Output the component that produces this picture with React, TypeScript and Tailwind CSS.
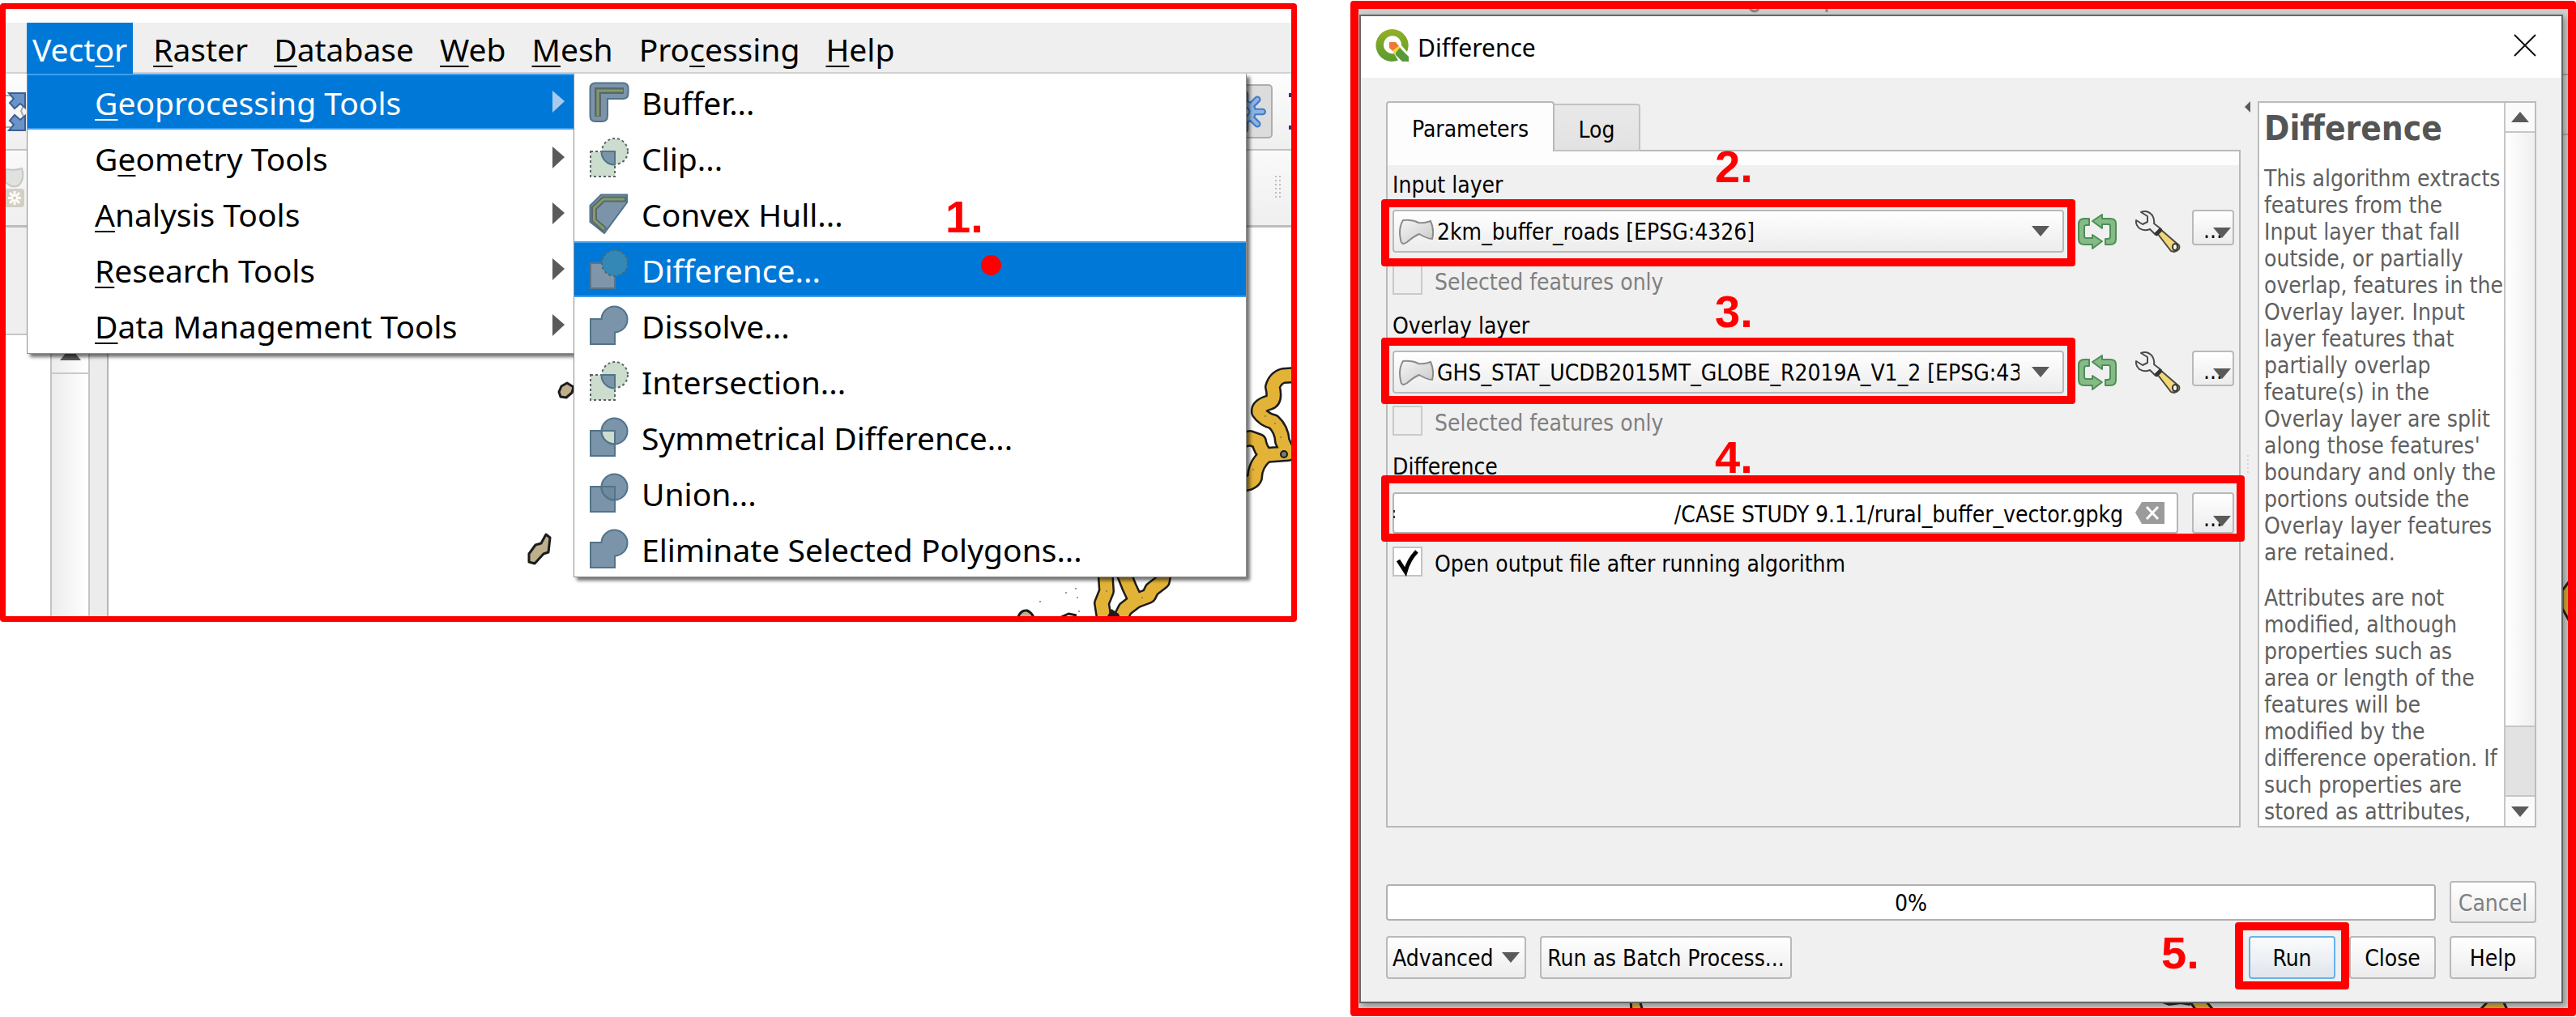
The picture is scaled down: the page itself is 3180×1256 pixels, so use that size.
import type { ReactNode } from 'react';

const BLUE = '#7b94a9';
const EDGE = '#51748a';
const PALE = '#ccdccd';

const UNION_PATH = 'M2 17 H15.5 A16 16 0 1 1 32 33.5 V48 H2 Z';
const LENS_PATH = 'M15.5 17 H32 V33.5 A16 16 0 0 1 15.5 17 Z';

type IconKind = 'buffer' | 'clip' | 'hull' | 'difference' | 'dissolve' | 'symmetric' | 'union';

function ToolIcon({ kind }: { kind: IconKind }) {
  return (
    <svg viewBox="0 0 50 50" className="size-[50px] shrink-0" aria-hidden="true">
      {kind === 'buffer' && (
        <g>
          <path d="M8 1.5 H42 Q48.500 1.500 48.500 8 V14 Q48.500 21 42 21 H23 V42 Q23 49 16 49 H8 Q1.500 49 1.500 42 V8 Q1.500 1.500 8 1.500 Z" fill={BLUE} stroke={EDGE} strokeWidth="2" />
          <path d="M11 43 V11 H43" fill="none" stroke="#5c666b" strokeWidth="8" />
          <path d="M11 42 V11 H42" fill="none" stroke="#7d9d6c" strokeWidth="3" />
        </g>
      )}
      {kind === 'clip' && (
        <g>
          <circle cx="32" cy="17" r="16" fill={PALE} stroke="#59645f" strokeWidth="2" strokeDasharray="3 3" />
          <rect x="2" y="17" width="30" height="31" fill={PALE} stroke="#59645f" strokeWidth="2" strokeDasharray="3 3" />
          <path d={LENS_PATH} fill={BLUE} stroke={EDGE} strokeWidth="2" />
        </g>
      )}
      {kind === 'hull' && (
        <g>
          <path d="M15 1.500 H47 V11 L19 49 L1.500 35 V15 Z" fill={BLUE} stroke={EDGE} strokeWidth="2" />
          <path d="M46 7 H18 L6.500 18 V33 L20 45" fill="none" stroke="#5c666b" strokeWidth="7" />
          <path d="M44 7 H18 L6.500 18 V33 L19 44" fill="none" stroke="#7d9d6c" strokeWidth="3" />
        </g>
      )}
      {kind === 'difference' && (
        <g>
          <rect x="2" y="17" width="30" height="31" fill="#7f95aa" stroke="#5d7486" strokeWidth="2" />
          <circle cx="32" cy="17" r="16" fill="#3388b5" stroke="#4c6577" strokeWidth="2" strokeDasharray="3 3" />
        </g>
      )}
      {kind === 'dissolve' && <path d={UNION_PATH} fill={BLUE} stroke={EDGE} strokeWidth="2" />}
      {(kind === 'symmetric' || kind === 'union') && (
        <g stroke={EDGE} strokeWidth="2">
          <path d={UNION_PATH} fill={BLUE} />
          <path d={LENS_PATH} fill={kind === 'union' ? '#6f8a9f' : PALE} />
          <path d="M32 33.500 A16 16 0 0 1 15.500 17" fill="none" />
        </g>
      )}
    </svg>
  );
}

function Triangle({ dir, className }: { dir: 'up' | 'down' | 'left'; className: string }) {
  const points = { up: '0,10 10,10 5,0', down: '0,0 10,0 5,10', left: '10,0 10,10 0,5' }[dir];
  return (
    <svg viewBox="0 0 10 10" preserveAspectRatio="none" className={className} aria-hidden="true">
      <polygon points={points} fill="#5a5a5a" />
    </svg>
  );
}

function Mnemonic({ text, at }: { text: string; at: number }) {
  return (
    <span>
      {text.slice(0, at)}
      <span className="underline decoration-2 underline-offset-[5px] [text-decoration-skip-ink:none]">{text[at]}</span>
      {text.slice(at + 1)}
    </span>
  );
}

function Step({ children, className }: { children: ReactNode; className: string }) {
  return (
    <span className={`pointer-events-none absolute z-20 font-['Liberation_Sans',sans-serif] text-[56px] leading-[56px] font-bold text-[#ff0000] ${className}`}>
      {children}
    </span>
  );
}

function Highlight({ className }: { className: string }) {
  return <span className={`pointer-events-none absolute z-20 rounded-[4px] border-10 border-[#ff0000] ${className}`} />;
}

const MENU_BAR: [string, number][] = [
  ['Vector', 4],
  ['Raster', 0],
  ['Database', 0],
  ['Web', 0],
  ['Mesh', 0],
  ['Processing', 3],
  ['Help', 0],
];

const VECTOR_MENU: [string, number][] = [
  ['Geoprocessing Tools', 0],
  ['Geometry Tools', 1],
  ['Analysis Tools', 0],
  ['Research Tools', 0],
  ['Data Management Tools', 0],
];

const GEOPROCESSING: [string, IconKind][] = [
  ['Buffer...', 'buffer'],
  ['Clip...', 'clip'],
  ['Convex Hull...', 'hull'],
  ['Difference...', 'difference'],
  ['Dissolve...', 'dissolve'],
  ['Intersection...', 'clip'],
  ['Symmetrical Difference...', 'symmetric'],
  ['Union...', 'union'],
  ['Eliminate Selected Polygons...', 'dissolve'],
];

const ROW_ACTIVE = 'bg-[#0078d7] text-white shadow-[inset_0_2px_0_#3d9ff0,inset_0_-2px_0_#3d9ff0]';

function RoadBuffers() {
  const roads = [
    'M1600 463 L1584 464 Q1574 467 1571 478 Q1575 494 1567 497 Q1553 501 1554 509 Q1560 518 1572 521 Q1582 530 1583 545 L1590 560 L1563 562 Q1556 556 1554 545 L1543 541 L1530 545',
    'M1563 562 Q1549 574 1549 590 Q1546 597 1532 598',
    'M1364 700 L1366 730 L1360 745 L1364 770',
    'M1384 700 L1394 725 L1402 742 L1389 752 L1380 770',
    'M1402 742 L1418 736 L1422 728 L1435 718 L1438 700',
  ];
  return (
    <svg viewBox="134 281 1460 480" preserveAspectRatio="xMaxYMin meet" className="absolute inset-0 size-full" aria-hidden="true">
      {roads.map((d) => (
        <path key={d} d={d} fill="none" stroke="#1c1c1c" strokeWidth="20" strokeLinejoin="round" />
      ))}
      {roads.map((d) => (
        <path key={d} d={d} fill="none" stroke="#e3b337" strokeWidth="15" strokeLinejoin="round" />
      ))}
      <circle cx="1585" cy="561" r="4" fill="#777" stroke="#1c1c1c" strokeWidth="2" />
      <path d="M1366 763 L1372 752 L1381 758 L1383 763 Z" fill="#1c1c1c" />
      <g fill="#bfb08c" stroke="#1c1c1c" strokeWidth="3" strokeLinejoin="round">
        <path d="M690 484 L693 477 L700 473 L708 478 L706 485 L699 491 L692 490 Z" />
        <path d="M674 660 L679 664 L677 682 L671 684 L660 696 L653 694 L653 684 L661 673 L668 671 Z" />
        <path d="M1256 766 Q1258 753 1268 754 Q1275 757 1277 766 Z" />
        <path d="M1310 762 L1319 758 L1329 760" fill="none" />
      </g>
      <g fill="#777">
        <circle cx="1316" cy="732" r="1" />
        <circle cx="1328" cy="727" r="1" />
        <circle cx="1330" cy="738" r="1" />
        <circle cx="1284" cy="743" r="1" />
        <circle cx="1332" cy="755" r="1" />
        <circle cx="1562" cy="514" r="1" />
        <circle cx="1574" cy="523" r="1" />
        <circle cx="1581" cy="540" r="1" />
        <circle cx="1547" cy="580" r="1" />
        <circle cx="1366" cy="730" r="1" />
        <circle cx="1410" cy="738" r="1" />
      </g>
    </svg>
  );
}

function VectorMenuFigure() {
  return (
    <section className="relative mt-[4px] min-w-0 overflow-hidden rounded-[4px] border-7 border-[#ff0000] bg-white pt-[17px] font-['Noto_Sans',sans-serif] text-[39px] text-black">
      <nav className="flex h-[63px] gap-[18px] border-b-2 border-[#d2d2d2] bg-[#efefef] pl-[26px]" aria-label="Main menu">
        {MENU_BAR.map(([label, at], i) => (
          <button
            key={label}
            type="button"
            className={`h-[63px] px-[7px] pt-[2px] leading-[58px] ${i === 0 ? 'bg-[#0078d7] text-white' : ''}`}
          >
            <Mnemonic text={label} at={at} />
          </button>
        ))}
      </nav>

      <div className="relative">
        <div className="flex h-[95px] items-center justify-between border-b-2 border-[#c3c3c3] bg-linear-to-b from-[#fdfdfd] to-[#efefef]">
          <svg viewBox="0 0 25 50" className="h-[50px] w-[25px]" aria-hidden="true">
            <path d="M0 5 H6 M0 44 H6 M23 15 L19 24 L23 33" stroke="#aaa" strokeWidth="2" fill="none" />
            <path d="M4 2 H24 V20 L18 15 L11 21 L5 14 L10 9 Z M4 48 H24 V30 L18 35 L11 29 L5 36 L10 41 Z" fill="#6a94c8" stroke="#3d5f95" strokeWidth="2" />
          </svg>
          <div className="flex items-center gap-[20px]">
            <button type="button" aria-label="Processing toolbox" className="flex h-[67px] w-[68px] items-center justify-center rounded-[5px] border-2 border-[#adadad] bg-[#dcdcdc]">
              <svg viewBox="0 0 48 48" className="size-[52px]" aria-hidden="true">
                <g stroke="#3f7cc8" strokeWidth="8" strokeLinecap="round">
                  <path d="M24 4 V44 M4 24 H44 M10 10 L38 38 M38 10 L10 38" />
                </g>
                <circle cx="24" cy="24" r="13" fill="#3f7cc8" />
                <g stroke="#8fb4e2" strokeWidth="4" strokeLinecap="round">
                  <path d="M24 4 V44 M4 24 H44 M10 10 L38 38 M38 10 L10 38" />
                </g>
                <circle cx="24" cy="24" r="11" fill="#8fb4e2" />
                <circle cx="24" cy="24" r="5" fill="#dcdcdc" stroke="#3f7cc8" strokeWidth="2" />
              </svg>
            </button>
            <span className="flex flex-col gap-[35px]">
              <i className="block h-[5px] w-[3px] bg-[#5b1d73]" />
              <i className="block h-[5px] w-[3px] bg-[#5b1d73]" />
            </span>
          </div>
        </div>
        <div className="flex h-[95px] items-center justify-between border-b-3 border-[#bdbdbd] bg-linear-to-b from-[#fafafa] to-[#efefef] pr-[13px]">
          <svg viewBox="0 0 25 50" className="h-[50px] w-[25px]" aria-hidden="true">
            <path d="M0 2 Q12 4 20 1 Q24 14 16 22 Q8 26 0 18 Z" fill="#dfe2dd" stroke="#c5c8c3" strokeWidth="2" />
            <rect x="-6" y="26" width="29" height="23" rx="4" fill="#d3cfc2" />
            <path d="M11 29 V46 M3 37.500 H19 M5 31 L17 44 M17 31 L5 44" stroke="#fbfbf8" strokeWidth="3" />
            <circle cx="11" cy="37.500" r="2" fill="#d3cfc2" />
          </svg>
          <svg viewBox="0 0 8 32" className="h-[32px] w-[8px]" aria-hidden="true">
            <path d="M2 1 V31 M7 1 V31" stroke="#bcbcbc" strokeWidth="2" strokeDasharray="2 3" />
          </svg>
        </div>
        <div className="flex h-[480px]">
          <div className="flex w-[127px] shrink-0 flex-col">
            <div className="h-[133px] border-b-2 border-[#c6c6c6] bg-[#efefef]" />
            <div className="flex flex-1 justify-end">
              <div className="w-[49px] border-x-2 border-[#c3c3c3] bg-linear-to-r from-[#ececec] to-white">
                <div className="flex h-[48px] items-center justify-center border-b-2 border-[#c9c9c9]">
                  <Triangle dir="up" className="h-[16px] w-[26px]" />
                </div>
              </div>
              <div className="w-[23px] border-r-2 border-[#b5b5b5] bg-[#ececec]" />
            </div>
          </div>
          <div className="relative flex-1">
            <RoadBuffers />
          </div>
        </div>

        <div role="menu" className="absolute top-0 left-[26px] w-[676px] border-x border-b border-[#8f8f8f] bg-white shadow-[4px_4px_4px_rgba(0,0,0,0.55)]">
          {VECTOR_MENU.map(([label, at], i) => (
            <button
              key={label}
              type="button"
              role="menuitem"
              className={`flex h-[69px] w-full items-center justify-between pr-[11px] pl-[83px] text-left leading-[65px] ${i === 0 ? ROW_ACTIVE : ''}`}
            >
              <span className="pt-[2px]"><Mnemonic text={label} at={at} /></span>
              <svg viewBox="0 0 15 27" className="h-[27px] w-[15px]" aria-hidden="true">
                <polygon points="0,0 15,13 0,27" fill={i === 0 ? '#a6cbef' : '#5a5a5a'} />
              </svg>
            </button>
          ))}
        </div>

        <div role="menu" className="absolute top-0 left-[701px] w-[831px] border-x border-b border-[#8f8f8f] bg-white shadow-[4px_4px_4px_rgba(0,0,0,0.55)]">
          {GEOPROCESSING.map(([label, kind]) => (
            <button
              key={label}
              type="button"
              role="menuitem"
              className={`flex h-[69px] w-full items-center gap-[15px] pl-[18px] text-left leading-[65px] ${kind === 'difference' ? ROW_ACTIVE : ''}`}
            >
              <ToolIcon kind={kind} />
              <span className="pt-[2px]">{label}</span>
            </button>
          ))}
          <Step className="top-[149px] left-[458px]">1.</Step>
          <span className="pointer-events-none absolute top-[224px] left-[502px] size-[25px] rounded-full bg-[#ff0000]" />
        </div>
      </div>
    </section>
  );
}

const BUTTON = 'rounded-[4px] border-2 border-[#b9b9b9] bg-linear-to-b from-white to-[#ececec]';

function QgisLogo() {
  return (
    <svg viewBox="0 0 42 42" className="size-[42px]" aria-hidden="true">
      <defs>
        <linearGradient id="ring" x1="0" y1="0" x2="0" y2="1">
          <stop offset="0" stopColor="#93b023" />
          <stop offset="1" stopColor="#5a9a32" />
        </linearGradient>
      </defs>
      <path d="M21 1 A20 20 0 1 0 28 39.500 L23 31 A11 11 0 1 1 32 21 L39 29 A20 20 0 0 0 21 1 Z" fill="url(#ring)" />
      <path d="M17 17 L25 17 L29 22 L21 28 L17 24 Z" fill="#ee7a34" />
      <path d="M21 28 L29 22 L32 25 L24 33 Z" fill="#f5d63c" />
      <path d="M25 30 L30 24 L41 35 V41 H33 L25 33 Z" fill="#589a3a" />
    </svg>
  );
}

function PolygonIcon() {
  return (
    <svg viewBox="0 0 44 32" className="pointer-events-none absolute top-1/2 left-[7px] h-[32px] w-[44px] -translate-y-1/2" aria-hidden="true">
      <defs>
        <linearGradient id="poly" x1="0" y1="0" x2="1" y2="1">
          <stop offset="0" stopColor="#f5f5f5" />
          <stop offset="1" stopColor="#c9c9c9" />
        </linearGradient>
      </defs>
      <path d="M6 2 Q17 1 25 5 Q32 6 40 3 Q45 14 42 25 Q36 25 26 19 Q19 22 11 29 Q4 34 3 26 Q0 12 6 2 Z" fill="url(#poly)" stroke="#8b8c88" strokeWidth="2" />
    </svg>
  );
}

function IterateIcon() {
  return (
    <svg viewBox="0 0 50 44" className="h-[44px] w-[50px]" aria-hidden="true">
      <g fill="#86ba86" stroke="#4d8f57" strokeWidth="2" strokeLinejoin="round">
        <path d="M15 6 H9 Q2 6 2 13 V31 Q2 38 9 38 H19 V43 L31 34 L19 26 V30 H11 Q9 30 9 27 V16 Q9 14 12 14 H15 Z" />
        <path d="M35 38 H41 Q48 38 48 31 V12 Q48 6 41 6 H31 V1 L19 9 L31 18 V13 H39 Q41 13 41 16 V28 Q41 31 38 31 H35 Z" />
      </g>
    </svg>
  );
}

function WrenchIcon() {
  return (
    <svg viewBox="0 0 56 52" className="h-[52px] w-[56px]" aria-hidden="true">
      <path d="M27 28 L32 24 L54 43 Q56 49 48 51 L44 50 Z" fill="#f3d676" stroke="#4a4a40" strokeWidth="2" strokeLinejoin="round" />
      <path d="M7 2 Q15 -1 21 6 Q24 11 23 16 L32 23 L25 30 L18 23 Q11 26 5 22 Q0 17 1 12 L9 17 L15 14 L15 7 Z" fill="#eef0ee" stroke="#4a4a4a" strokeWidth="2" strokeLinejoin="round" />
      <path d="M25 30 L32 23" stroke="#333" strokeWidth="5" />
      <ellipse cx="49" cy="45" rx="3" ry="4" fill="#f5f5f5" stroke="#333" strokeWidth="2" />
    </svg>
  );
}

function MoreButton({ className }: { className: string }) {
  return (
    <button type="button" aria-label="More options" className={`relative w-[52px] shrink-0 ${BUTTON} ${className}`}>
      <span className="absolute bottom-[2px] left-[12px] leading-[28px]">...</span>
      <Triangle dir="down" className="absolute right-[2px] bottom-[7px] h-[13px] w-[22px]" />
    </button>
  );
}

function LayerField({ id, label, value, highlight, step, stepClass }: { id: string; label: string; value: string; highlight: string; step: string; stepClass: string }) {
  return (
    <div className="relative mb-[18px]">
      <label htmlFor={id} className="mb-[10px] block leading-[41px]">{label}</label>
      <div className="relative flex h-[53px]">
        <div className="relative min-w-0 flex-1">
          <select id={id} defaultValue={value} className={`size-full appearance-none overflow-hidden pt-[3px] pr-[53px] pl-[53px] ${BUTTON}`}>
            <option>{value}</option>
          </select>
          <PolygonIcon />
          <Triangle dir="down" className="pointer-events-none absolute top-[20px] right-[18px] h-[13px] w-[22px]" />
          <Highlight className={`-inset-x-[14px] ${highlight}`} />
        </div>
        <button type="button" aria-label="Iterate over this layer" className="ml-[16px] flex w-[50px] items-center"><IterateIcon /></button>
        <button type="button" aria-label="Advanced options" className="mr-[14px] ml-[22px] flex w-[56px] items-center"><WrenchIcon /></button>
        <MoreButton className="h-[44px]" />
      </div>
      <label className="mt-[15px] flex h-[37px] items-center gap-[15px] text-[#808080]">
        <input type="checkbox" disabled className="size-[37px] appearance-none border-2 border-[#cacaca] bg-[#efefef]" />
        <span className="pt-[6px]">Selected features only</span>
      </label>
      <Step className={`left-[398px] ${stepClass}`}>{step}</Step>
    </div>
  );
}

const HELP_INTRO = `This algorithm extracts
features from the
Input layer that fall
outside, or partially
overlap, features in the
Overlay layer. Input
layer features that
partially overlap
feature(s) in the
Overlay layer are split
along those features'
boundary and only the
portions outside the
Overlay layer features
are retained.`;

const HELP_ATTRIBUTES = `Attributes are not
modified, although
properties such as
area or length of the
features will be
modified by the
difference operation. If
such properties are
stored as attributes,`;

function HelpPanel() {
  return (
    <aside className="flex w-[344px] shrink-0 border-2 border-[#bcbcbc] bg-white text-[#606060]">
      <div className="min-w-0 flex-1 overflow-hidden pl-[6px] whitespace-pre">
        <h2 className="mt-[7px] text-[42px] leading-[50px] font-bold text-[#555]">Difference</h2>
        <p className="mt-[20px] leading-[33px]">{HELP_INTRO}</p>
        <p className="mt-[23px] leading-[33px]">{HELP_ATTRIBUTES}</p>
      </div>
      <div className="flex w-[38px] flex-col border-l-2 border-[#c6c6c6]">
        <button type="button" aria-label="Scroll up" className="flex h-[37px] items-center justify-center border-b-2 border-[#c6c6c6] bg-[#fafafa]">
          <Triangle dir="up" className="h-[13px] w-[22px]" />
        </button>
        <div className="flex-1 bg-linear-to-r from-white to-[#efefef]" />
        <div className="h-[88px] border-y-2 border-[#c6c6c6] bg-[#e2e2e2]" />
        <button type="button" aria-label="Scroll down" className="flex h-[36px] items-center justify-center bg-[#fafafa]">
          <Triangle dir="down" className="h-[13px] w-[22px]" />
        </button>
      </div>
    </aside>
  );
}

function DialogFigure() {
  return (
    <section className="relative mt-px min-w-0 rounded-[4px] border-10 border-[#ff0000] bg-[#cfd0d0] pt-[7px] pr-[6px] pb-[6px] pl-px font-['DejaVu_Sans_Condensed','DejaVu_Sans',sans-serif] text-[28px] text-black">
      <svg viewBox="1677 11 1493 1235" preserveAspectRatio="none" className="absolute inset-0 size-full" aria-hidden="true">
        <path d="M2160 11 Q2166 17 2171 11 M2255 11 V15" stroke="#888" strokeWidth="3" fill="none" />
        <path d="M3163 92 H3170 M3163 166 H3170" stroke="#a5a5a5" strokeWidth="2" />
        <g fill="#d9a93a" stroke="#222" strokeWidth="3">
          <path d="M2013 1236 L2014 1250 L2028 1250 L2024 1236 Z" />
          <path d="M2702 1236 L2712 1250 L2732 1248 L2722 1236 Z" />
          <path d="M3060 1250 L3072 1237 H3090 L3096 1250 Z" />
          <path d="M3172 718 L3163 730 V752 L3172 768 Z" />
        </g>
        <path d="M2670 1238 L2678 1241 L2692 1239 L2704 1241" stroke="#222" strokeWidth="4" fill="none" />
      </svg>

      <div role="dialog" aria-label="Difference" className="relative border-2 border-[#666] bg-[#f0f0f0] shadow-[3px_3px_8px_rgba(0,0,0,0.35)]">
        <header className="flex h-[76px] items-center justify-between bg-white pr-[31px] pl-[18px]">
          <div className="flex items-center gap-[10px] pb-[4px] font-['Noto_Sans',sans-serif] text-[30px]">
            <QgisLogo />
            <span className="pt-[4px]">Difference</span>
          </div>
          <button type="button" aria-label="Close window" className="pb-[4px]">
            <svg viewBox="0 0 28 28" className="size-[28px]" aria-hidden="true">
              <path d="M1 1 L27 27 M27 1 L1 27" stroke="#111" strokeWidth="2" />
            </svg>
          </button>
        </header>

        <div className="px-[31px] pt-[29px] pb-[28px]">
          <div className="flex h-[897px]">
            <div className="flex min-w-0 flex-1 flex-col">
              <div role="tablist" className="relative z-10 flex h-[62px] items-end">
                <button type="button" role="tab" aria-selected="true" className="h-[62px] w-[208px] rounded-t-[4px] border-2 border-b-0 border-[#b9b9b9] bg-[#fdfdfd] pt-[6px]">Parameters</button>
                <button type="button" role="tab" aria-selected="false" className="h-[59px] w-[106px] rounded-tr-[4px] border-2 border-l-0 border-[#c3c3c3] bg-linear-to-b from-[#e9e9e9] to-[#e2e2e2] pt-[6px]">Log</button>
              </div>
              <div role="tabpanel" className="-mt-[2px] flex-1 border-2 border-[#b9b9b9]">
                <div className="h-[17px] bg-[#fdfdfd]" />
                <form className="px-[6px] pt-[4px]" onSubmit={(e) => e.preventDefault()}>
                  <LayerField id="input-layer" label="Input layer" value="2km_buffer_roads [EPSG:4326]" highlight="-top-[13px] -bottom-[17px]" step="2." stepClass="-top-[30px]" />
                  <LayerField id="overlay-layer" label="Overlay layer" value="GHS_STAT_UCDB2015MT_GLOBE_R2019A_V1_2 [EPSG:4326]" highlight="-top-[16px] -bottom-[13px]" step="3." stepClass="-top-[25px]" />
                  <div className="relative">
                    <label htmlFor="output-file" className="mb-[10px] block leading-[41px]">Difference</label>
                    <div className="relative flex h-[53px] items-center gap-[17px]">
                      <div className="relative min-w-0 flex-1">
                        <input id="output-file" type="text" defaultValue="/CASE STUDY 9.1.1/rural_buffer_vector.gpkg" className="h-[51px] w-full rounded-[4px] border-2 border-[#b5b5b5] bg-white pt-[3px] pr-[66px] text-right" />
                        <span className="pointer-events-none absolute top-[22px] left-[1px] h-[10px] w-[2px] border-y-3 border-[#333]" />
                        <button type="button" aria-label="Clear" className="absolute top-[12px] right-[17px]">
                          <svg viewBox="0 0 36 27" className="h-[27px] w-[36px]" aria-hidden="true">
                            <path d="M0 13 L8 0 H36 V27 H8 Z" fill="#9b9b9b" />
                            <path d="M14 6 L28 21 M28 6 L14 21" stroke="#fff" strokeWidth="3" />
                          </svg>
                        </button>
                      </div>
                      <MoreButton className="h-[51px]" />
                      <Highlight className="-top-[20px] -right-[13px] -bottom-[9px] -left-[14px]" />
                    </div>
                    <label className="mt-[15px] flex h-[37px] items-center gap-[15px]">
                      <span className="relative size-[37px]">
                        <input type="checkbox" defaultChecked className="block size-[37px] appearance-none border-2 border-[#c3c3c3] bg-white" />
                        <svg viewBox="0 0 37 37" className="pointer-events-none absolute inset-0 size-[37px]" aria-hidden="true">
                          <path d="M7 17 L16 31 Q20 16 30 6" fill="none" stroke="#000" strokeWidth="5" />
                        </svg>
                      </span>
                      <span className="pt-[6px]">Open output file after running algorithm</span>
                    </label>
                    <Step className="-top-[19px] left-[398px]">4.</Step>
                  </div>
                </form>
              </div>
            </div>

            <div className="flex w-[21px] shrink-0 flex-col justify-between pl-[5px]">
              <Triangle dir="left" className="h-[14px] w-[7px]" />
              <svg viewBox="0 0 4 24" className="h-[24px] w-[8px]" aria-hidden="true">
                <path d="M2 0 V24" stroke="#bbb" strokeWidth="1" strokeDasharray="2 3" />
              </svg>
              <span className="h-[14px]" />
            </div>
            <HelpPanel />
          </div>

          <div className="mt-[66px] flex items-center gap-[17px]">
            <div role="progressbar" aria-valuenow={0} aria-label="Progress" className="flex h-[45px] flex-1 items-center justify-center rounded-[4px] border-2 border-[#b0b0b0] bg-white pt-[4px]">0%</div>
            <button type="button" disabled className={`h-[52px] w-[107px] pt-[3px] text-[#808080] ${BUTTON}`}>Cancel</button>
          </div>
          <div className="mt-[16px] flex gap-[17px]">
            <button type="button" className={`flex h-[53px] w-[173px] items-center justify-between px-[6px] ${BUTTON}`}>
              <span className="pt-[3px]">Advanced</span>
              <Triangle dir="down" className="h-[13px] w-[22px]" />
            </button>
            <button type="button" className={`h-[53px] w-[311px] pt-[3px] ${BUTTON}`}>Run as Batch Process...</button>
            <div className="relative ml-auto">
              <button type="button" className="h-[53px] w-[107px] rounded-[4px] border-2 border-[#66b3ee] bg-linear-to-b from-[#fbfcfd] to-[#e0e5ec] pt-[3px]">Run</button>
              <Highlight className="-inset-x-[17px] -top-[17px] -bottom-[13px]" />
              <Step className="-top-[7px] -left-[108px]">5.</Step>
            </div>
            <button type="button" className={`h-[53px] w-[107px] pt-[3px] ${BUTTON}`}>Close</button>
            <button type="button" className={`h-[53px] w-[107px] pt-[3px] ${BUTTON}`}>Help</button>
          </div>
        </div>
      </div>
    </section>
  );
}

export default function App() {
  return (
    <main className="grid grid-cols-[1601fr_1513fr] items-start gap-[66px] bg-white">
      <VectorMenuFigure />
      <DialogFigure />
    </main>
  );
}
